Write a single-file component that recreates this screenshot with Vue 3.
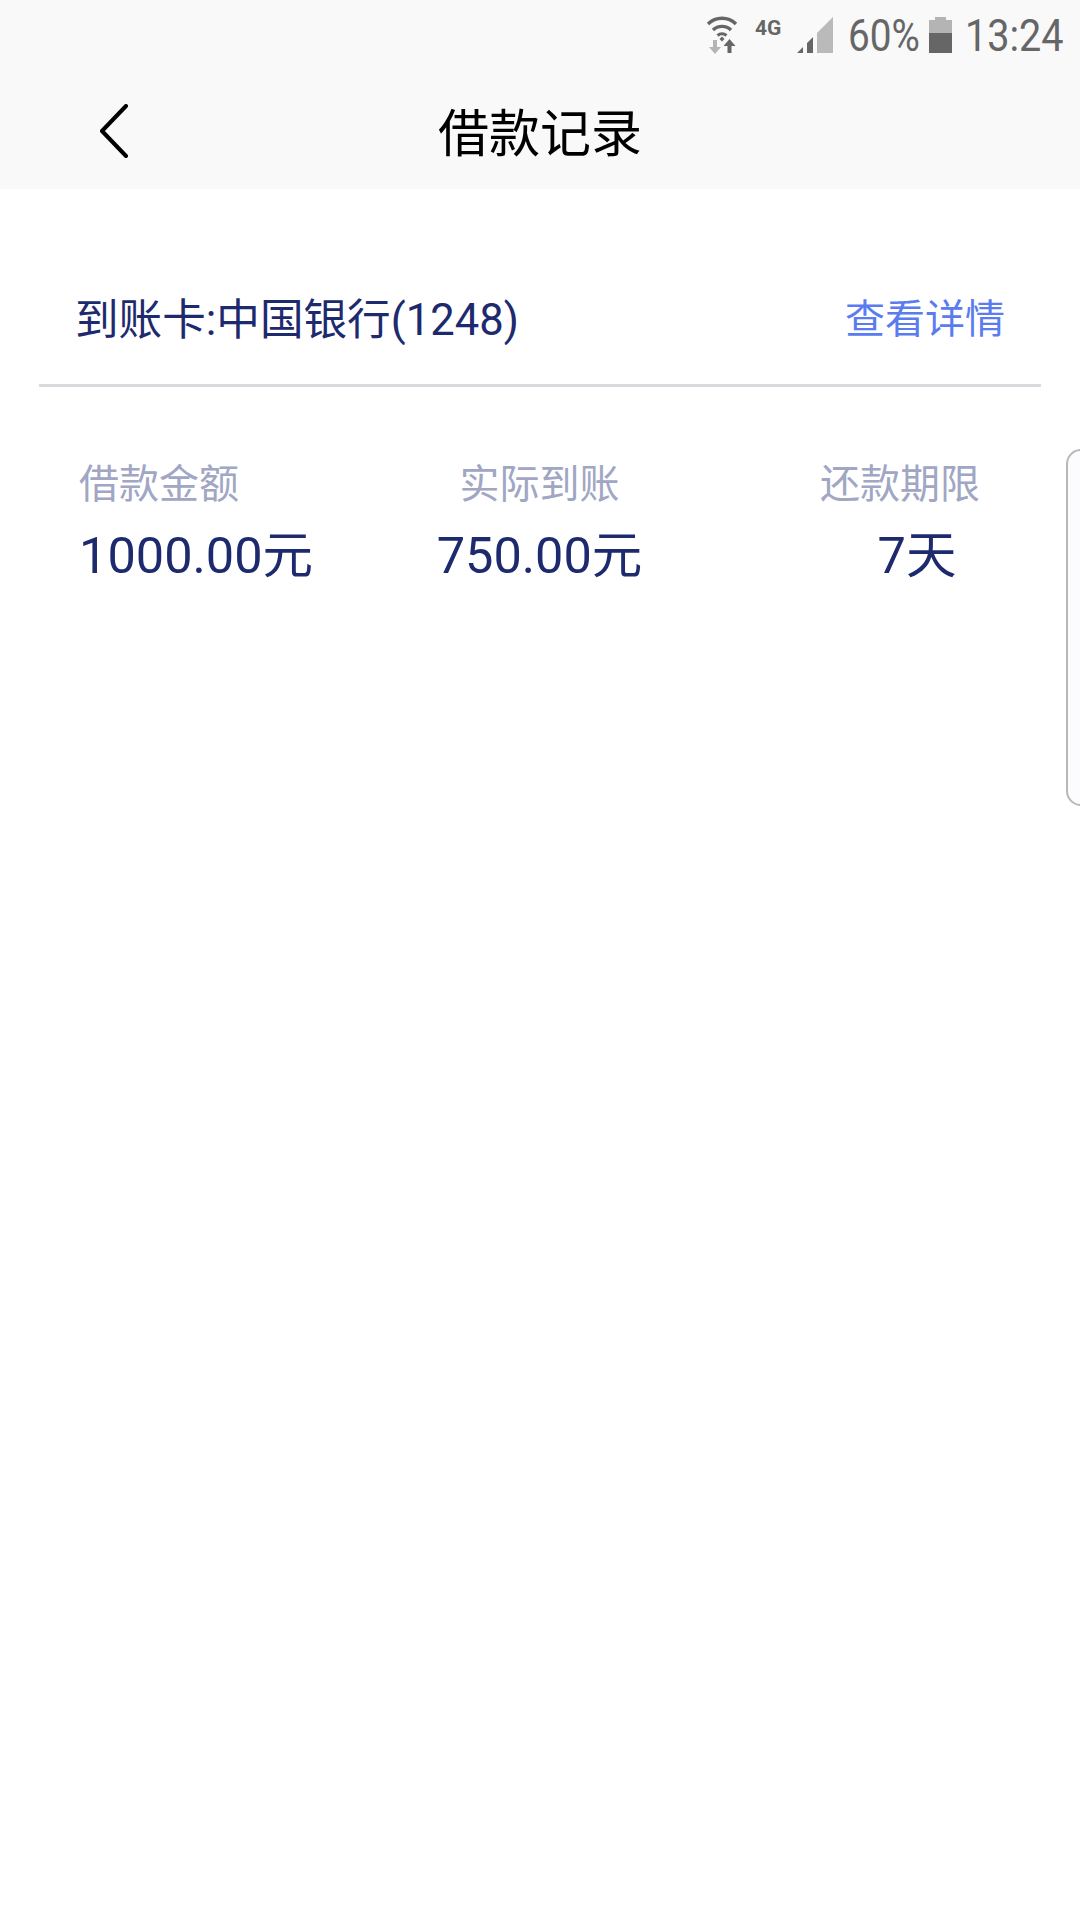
<template>
  <div class="page">
    <div class="top">
      <div class="status">
        <svg class="wifi" width="32" height="38" viewBox="0 0 32 38">
          <path d="M2 8 A20 20 0 0 1 30 8" fill="none" stroke="#666" stroke-width="3.4" />
          <path d="M7 14 A13 13 0 0 1 25 14" fill="none" stroke="#666" stroke-width="3.4" />
          <path d="M11.500 19.500 A7 7 0 0 1 20.500 19.500" fill="none" stroke="#666" stroke-width="3" />
          <path d="M13.500 23 L16 20.500 L18.500 23 L16 25.500 Z" fill="#666" />
          <path d="M7 24 h4 v7 h4 l-6 7 l-6 -7 h4 Z" fill="#b4b4b4" />
          <path d="M21.500 37 v-7 h-4 l6 -7 l6 7 h-4 v7 Z" fill="#666" />
        </svg>
        <span class="net">4G</span>
        <svg class="signal" width="36" height="36" viewBox="0 0 36 36">
          <path d="M20 36 V16 L36 0 V36 Z" fill="#bababa" />
          <path d="M0 36 L6 30 V36 Z M10 36 V26 L16 20 V36 Z" fill="#666" />
        </svg>
        <span class="pct">60%</span>
        <svg class="battery" width="23" height="36" viewBox="0 0 23 36">
          <path d="M6 0 H17 V3 H23 V16 H0 V3 H6 Z" fill="#b4b4b4" />
          <rect y="16" width="23" height="20" fill="#666" />
        </svg>
        <span class="time">13:24</span>
      </div>
      <div class="header">
        <svg class="back" width="30" height="54" viewBox="0 0 30 54">
          <path d="M27 2 L3 27 L27 52" fill="none" stroke="#000" stroke-width="4" stroke-linecap="round" stroke-linejoin="round" />
        </svg>
        <h1 class="title">借款记录</h1>
      </div>
    </div>

    <div class="card-row">
      <span class="card-name">到账卡:中国银行(1248)</span>
      <span class="card-link">查看详情</span>
    </div>

    <div class="stats">
      <div v-for="item in stats" :key="item.label" class="stat" :class="item.cls">
        <div class="stat-label">{{ item.label }}</div>
        <div class="stat-value">{{ item.value }}</div>
      </div>
    </div>

    <div class="side-tab" />
  </div>
</template>

<script setup>
const stats = [
  { label: '借款金额', value: '1000.00元', cls: 'stat-left' },
  { label: '实际到账', value: '750.00元', cls: 'stat-mid' },
  { label: '还款期限', value: '7天', cls: 'stat-right' }
];
</script>

<style>
body {
  margin: 0;
  background: #fff;
}
</style>

<style scoped>
.page {
  position: relative;
  width: 1080px;
  height: 1920px;
  overflow: hidden;
  background: #fff;
  font-family: Roboto, "Noto Sans CJK SC", sans-serif;
}

.top {
  height: 189px;
  background: #f9f9f9;
}

.status {
  display: flex;
  align-items: flex-start;
  height: 70px;
  padding-top: 16px;
  padding-left: 706px;
  box-sizing: border-box;
  color: #666;
}

.wifi {
  flex: none;
}

.net {
  flex: none;
  width: 28px;
  margin-left: 17px;
  margin-top: 1px;
  font-size: 21px;
  line-height: 22px;
  font-weight: 700;
}

.signal {
  flex: none;
  margin-left: 14px;
  margin-top: 1px;
}

.pct,
.time {
  flex: none;
  font-size: 44px;
  line-height: 40px;
  transform-origin: left center;
}

.pct {
  width: 81px;
  margin-left: 15px;
  transform: scaleX(0.88);
}

.battery {
  flex: none;
  margin-top: 1px;
}

.time {
  margin-left: 13px;
  transform: scaleX(0.9);
}

.header {
  position: relative;
  display: flex;
  align-items: center;
  justify-content: center;
  height: 119px;
}

.back {
  position: absolute;
  left: 99px;
  top: 34px;
}

.title {
  margin: 0;
  font-size: 51px;
  font-weight: 400;
  color: #000;
}

.card-row {
  display: flex;
  align-items: center;
  justify-content: space-between;
  height: 198px;
  margin: 0 39px;
  padding: 58px 36px 0 36px;
  box-sizing: border-box;
  border-bottom: 3px solid #d9dadd;
}

.card-name {
  font-size: 43.6px;
  color: #1e2a6e;
}

.card-link {
  font-size: 40px;
  color: #5a7cf0;
}

.stats {
  display: grid;
  grid-template-columns: 1fr auto 1fr;
  padding: 70px 80px 0 79px;
}

.stat-label {
  font-size: 40px;
  line-height: 56px;
  color: #a0a6c3;
}

.stat-value {
  margin-top: 14px;
  font-size: 50.5px;
  line-height: 58px;
  color: #1e2a6e;
}

.stat-mid {
  text-align: center;
}

.stat-right {
  justify-self: end;
  margin-right: 20px;
  text-align: center;
}

.stat-right .stat-value {
  padding-left: 34px;
}

.side-tab {
  position: absolute;
  top: 449px;
  left: 1066px;
  width: 30px;
  height: 357px;
  box-sizing: border-box;
  border: 2px solid #b8b8b8;
  border-radius: 20px;
  background: #fcfcfe;
}
</style>
